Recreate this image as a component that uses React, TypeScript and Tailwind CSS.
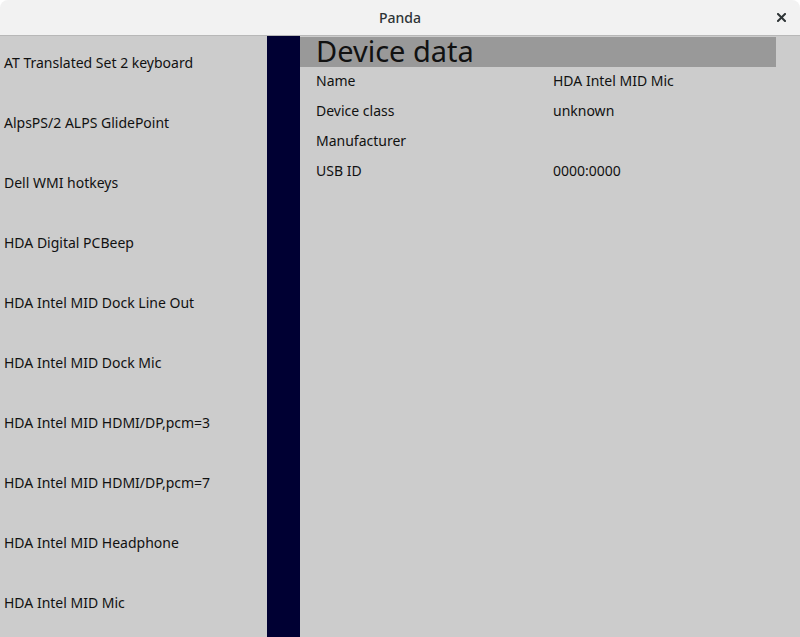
const devices = [
  'AT Translated Set 2 keyboard',
  'AlpsPS/2 ALPS GlidePoint',
  'Dell WMI hotkeys',
  'HDA Digital PCBeep',
  'HDA Intel MID Dock Line Out',
  'HDA Intel MID Dock Mic',
  'HDA Intel MID HDMI/DP,pcm=3',
  'HDA Intel MID HDMI/DP,pcm=7',
  'HDA Intel MID Headphone',
  'HDA Intel MID Mic',
];

const details = [
  ['Name', 'HDA Intel MID Mic'],
  ['Device class', 'unknown'],
  ['Manufacturer', ''],
  ['USB ID', '0000:0000'],
];

export default function App() {
  return (
    <div className="w-[800px] h-[637px] bg-white flex flex-col overflow-hidden font-['Noto_Sans',sans-serif] text-[#1a1a1a]">
      {/* Title bar */}
      <div className="h-[36px] shrink-0 rounded-t-[8px] bg-[#f2f2f2] border-b border-[#b8b8b8] flex items-center relative">
        <div className="flex-1 text-center text-[14px] font-medium text-[#2e3436]">Panda</div>
        <svg className="absolute right-[14px] top-[13px]" width="9" height="9" viewBox="0 0 9 9">
          <path d="M1 1 L8 8 M8 1 L1 8" stroke="#2e3436" strokeWidth="2" strokeLinecap="square" />
        </svg>
      </div>

      <div className="flex-1 flex bg-[#cccccc] min-h-0">
        {/* Device list */}
        <div className="w-[267px] shrink-0 flex flex-col">
          {devices.map((d) => (
            <div key={d} className="h-[60px] shrink-0 pl-[4px] pt-[15px] text-[14px] leading-[24px] text-[#111]">
              {d}
            </div>
          ))}
        </div>

        <div className="w-[33px] shrink-0 bg-[#000033]" />

        {/* Details */}
        <div className="flex-1 flex flex-col pt-[1px]">
          <div className="w-[476px] h-[30px] bg-[#999999] pl-[16px] text-[29px] leading-[27px] text-[#111]">
            Device data
          </div>
          <div className="flex flex-col -mt-[2px]">
            {details.map(([k, v]) => (
              <div key={k} className="h-[30px] flex items-center text-[14px] text-[#111]">
                <div className="w-[253px] pl-[16px]">{k}</div>
                <div>{v}</div>
              </div>
            ))}
          </div>
        </div>
      </div>
    </div>
  );
}
